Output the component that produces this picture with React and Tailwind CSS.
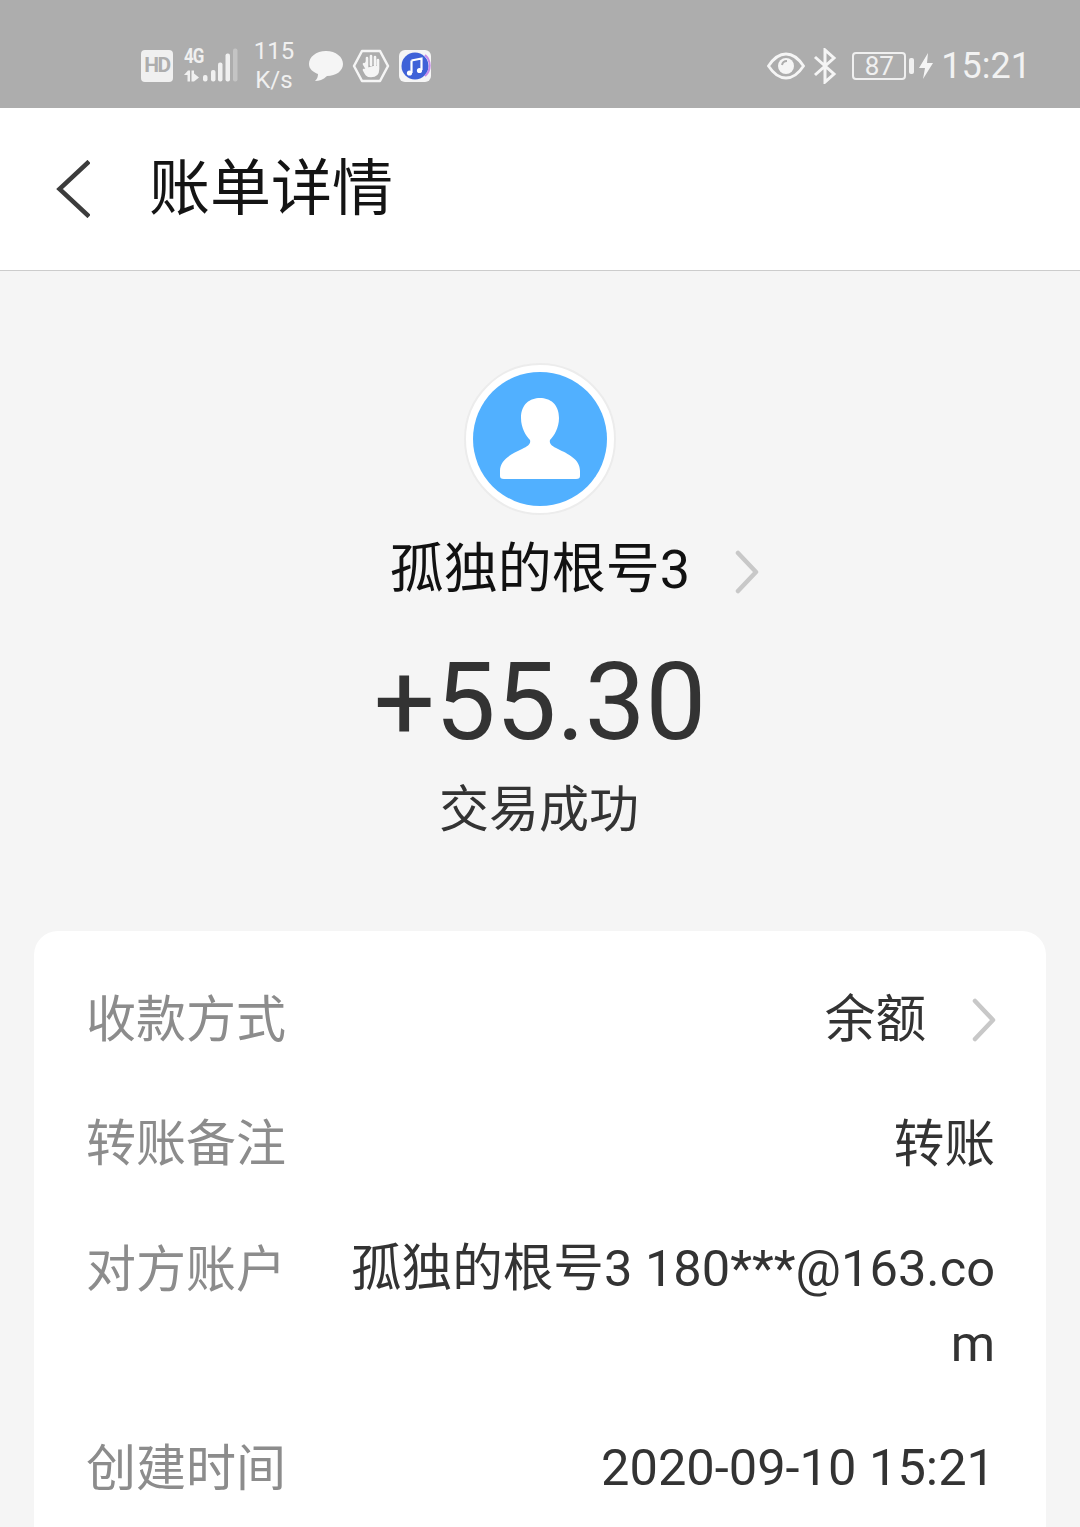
const Chevron = ({ className }) => (
  <svg viewBox="0 0 24 44" className={className} fill="none" stroke="#c8c8c8" strokeWidth="4.5" strokeLinecap="round" strokeLinejoin="round">
    <path d="M3 3 L21 22 L3 41" />
  </svg>
);

function StatusLeft() {
  return (
    <div className="flex items-center">
      <div className="w-[32px] h-[32px] rounded-[4px] bg-[#f0f0f0] flex items-center justify-center text-[#adadad] text-[21px] font-bold leading-none tracking-[-1.5px]">HD</div>
      <div className="relative w-[56px] h-[36px] ml-[9px]">
        <svg viewBox="0 0 56 36" className="w-[56px] h-[36px]" fill="#f0f0f0">
          <rect x="21" y="27" width="4.5" height="6.5" rx="2" />
          <rect x="29" y="22" width="4.5" height="11.5" rx="2" />
          <rect x="36" y="14.5" width="4.5" height="19" rx="2" />
          <rect x="43.5" y="5.5" width="4.5" height="28" rx="2" />
          <rect x="51" y="0.5" width="4.5" height="33" rx="2" fill="#c4c4c4" />
          <path d="M2 27 L6 22.5 H8 V33.5 H5.5 V27 Z M9.5 22.5 H12 V25.5 L17 29.5 L12 33.5 H9.5 Z" />
        </svg>
        <span className="absolute left-[2px] top-[1px] text-[17px] leading-[15px] font-bold tracking-[-1px] text-[#f0f0f0] scale-y-[1.15]">4G</span>
      </div>
      <div className="ml-[15px] w-[42px] text-[24px] leading-[29px] text-[#f0f0f0] text-center">
        <div>115</div>
        <div>K/s</div>
      </div>
      <svg viewBox="0 0 36 34" className="w-[36px] h-[34px] ml-[13px]" fill="#f5f5f5">
        <path d="M18 2 C28 2 35 8 35 15 C35 22 28 27 19 27 C15 31 11 32 7 32 C9 30 10 28 10 25 C5 23 1 20 1 15 C1 8 8 2 18 2 Z" />
      </svg>
      <svg viewBox="0 0 38 34" className="w-[38px] h-[34px] ml-[8px]" fill="none">
        <path d="M10 2 H28 L36 17 L28 32 H10 L2 17 Z" stroke="#f5f5f5" strokeWidth="2.5" strokeLinejoin="round" />
        <path d="M12 15 L15 20 V11 M15 16 V9 M19 16 V7 M23 16 V8 M26 17 V11 V20 C26 25 23 27 19 27 C15 27 14 25 12 21 Z" stroke="#f5f5f5" strokeWidth="2.6" strokeLinecap="round" strokeLinejoin="round" fill="#f5f5f5" />
      </svg>
      <svg viewBox="0 0 32 32" className="w-[32px] h-[32px] ml-[9px]">
        <rect width="32" height="32" rx="6" fill="#f5f5f5" />
        <circle cx="16" cy="16" r="13.5" fill="#3f62d8" />
        <path d="M26 5 A14 14 0 0 1 26 26" stroke="#c58bea" strokeWidth="2" fill="none" />
        <path d="M12.5 10.5 L22.5 8.5 V20" stroke="#fff" strokeWidth="2.2" fill="none" />
        <path d="M12.5 10.5 V23" stroke="#fff" strokeWidth="2.2" fill="none" />
        <circle cx="10.5" cy="23" r="2.6" fill="#fff" />
        <circle cx="20.5" cy="20.5" r="2.6" fill="#fff" />
      </svg>
    </div>
  );
}

function StatusRight() {
  return (
    <div className="flex items-center">
      <svg viewBox="0 0 38 28" className="w-[38px] h-[28px]" fill="none">
        <path d="M1.5 14 C8 4 14 2 19 2 C24 2 30 4 36.5 14 C30 24 24 26 19 26 C14 26 8 24 1.5 14 Z" stroke="#f5f5f5" strokeWidth="2.8" />
        <circle cx="19" cy="14" r="8" fill="#f5f5f5" />
        <path d="M15 13 A5 5 0 0 1 20 9" stroke="#adadad" strokeWidth="2" />
      </svg>
      <svg viewBox="0 0 24 36" className="w-[24px] h-[36px] ml-[8px]" fill="none" stroke="#f5f5f5" strokeWidth="3" strokeLinejoin="miter">
        <path d="M2 9 L21 26 L12 34 V2 L21 10 L2 27" />
      </svg>
      <div className="ml-[15px] w-[54px] h-[28px] rounded-[4px] border-2 border-[#f0f0f0] flex items-center justify-center text-[26px] leading-none text-[#f0f0f0]">87</div>
      <div className="ml-[3px] w-[5px] h-[16px] rounded-[2px] bg-[#f0f0f0]" />
      <svg viewBox="0 0 14 26" className="w-[14px] h-[26px] ml-[5px]" fill="#f5f5f5">
        <path d="M9 0 L0 15 H6 L4 26 L14 10 H8 Z" />
      </svg>
      <div className="ml-[8px] text-[36px] leading-none text-[#f2f2f2]">15:21</div>
    </div>
  );
}

function Row({ label, children, className = "" }) {
  return (
    <div className={"flex items-start justify-between " + className}>
      <div className="text-[#8c8c8c] text-[50px] leading-[74px] pt-[2px] shrink-0 w-[262px]">{label}</div>
      <div className="flex-1 min-w-0 text-right text-[#333333] text-[50.6px] leading-[75px] break-all">{children}</div>
    </div>
  );
}

export default function App() {
  return (
    <div
      className="w-[1080px] h-[1527px] overflow-hidden bg-[#f5f5f5] flex flex-col"
      style={{ fontFamily: "Roboto, 'Noto Sans CJK SC', sans-serif" }}
    >
      <div className="h-[108px] shrink-0 bg-[#adadad] flex items-center justify-between pl-[141px] pr-[49px] pt-[23px]">
        <StatusLeft />
        <StatusRight />
      </div>
      <div className="h-[163px] shrink-0 bg-white border-b border-[#cccccc] flex items-center pl-[56px]">
        <svg viewBox="0 0 34 58" className="w-[34px] h-[58px]" fill="none" stroke="#3c3c3c" strokeWidth="4.5" strokeLinejoin="miter">
          <path d="M33 1.5 L3.5 29 L33 56.5" />
        </svg>
        <div className="ml-[59px] text-[61px] leading-none text-[#141414]">账单详情</div>
      </div>

      <div className="flex flex-col items-center pt-[92px]">
        <div className="w-[152px] h-[152px] rounded-full bg-white border-2 border-[#ececec] flex items-center justify-center">
          <div className="w-[134px] h-[134px] rounded-full bg-[#51b0ff] flex items-center justify-center">
            <svg viewBox="0 0 80 82" className="w-[80px] h-[82px]" fill="#ffffff">
              <path d="M40 0 C50 0 59 6 59 20 C59 30 54 38 50 42 C49 46 52 48 58 51 C68 56 80 61 80 73 V78 C80 80 79 81 76 81 H4 C1 81 0 80 0 78 V73 C0 61 12 56 22 51 C28 48 31 46 30 42 C26 38 21 30 21 20 C21 6 30 0 40 0 Z" />
            </svg>
          </div>
        </div>
        <div className="relative mt-[23px] text-[54px] leading-[64px] text-[#111111]">
          孤独的根号3
          <Chevron className="absolute left-[345px] top-[12px] w-[24px] h-[44px]" />
        </div>
        <div className="mt-[38px] text-[108px] leading-[124px] text-[#333333]">+55.30</div>
        <div className="mt-[15px] -translate-x-px text-[50px] leading-[63px] text-[#333333]">交易成功</div>
      </div>

      <div className="mt-[89px] mx-[34px] flex-1 bg-white rounded-t-[24px] pt-[50px] pl-[52px] pr-[51px]">
        <Row label="收款方式">
          <div className="flex items-center justify-end pt-[1px]">
            余额
            <Chevron className="ml-[46px] -mr-[1px] w-[24px] h-[44px]" />
          </div>
        </Row>
        <Row label="转账备注" className="mt-[48px]"><div className="pt-[2px]">转账</div></Row>
        <Row label="对方账户" className="mt-[49px]">孤独的根号3 180***@163.com</Row>
        <Row label="创建时间" className="mt-[49px]">2020-09-10 15:21</Row>
      </div>
    </div>
  );
}
